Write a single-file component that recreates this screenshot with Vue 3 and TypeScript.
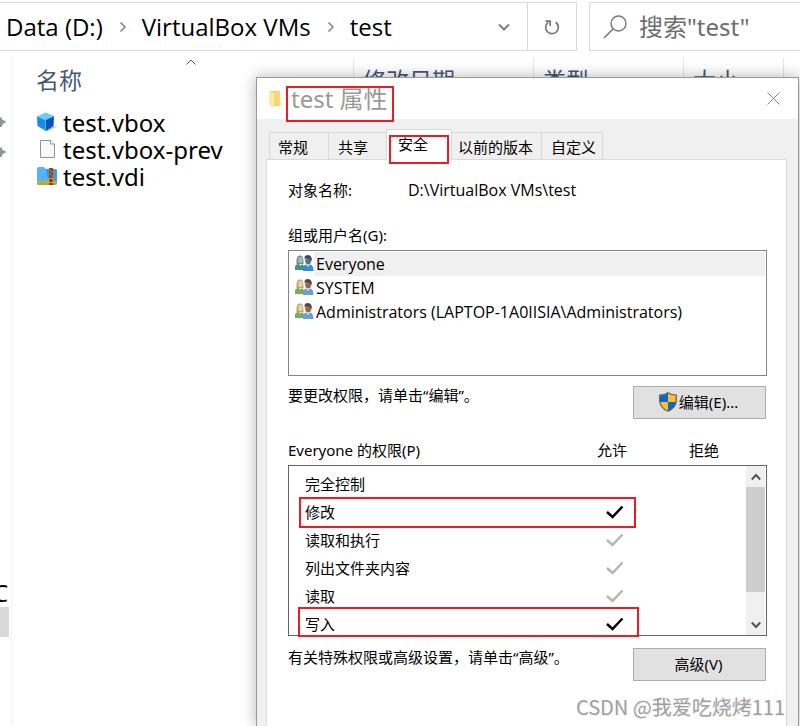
<script setup lang="ts">
import { ref } from 'vue'

interface FileEntry { name: string; kind: 'box' | 'page' | 'archive' }
interface Permission { label: string; state: '' | 'own' | 'inherited' }

const crumbs: string[] = ['Data (D:)', 'VirtualBox VMs', 'test']
const columns: string[] = ['名称', '修改日期', '类型', '大小']
const files: FileEntry[] = [
  { name: 'test.vbox', kind: 'box' },
  { name: 'test.vbox-prev', kind: 'page' },
  { name: 'test.vdi', kind: 'archive' },
]
const tabs: string[] = ['常规', '共享', '安全', '以前的版本', '自定义']
const activeTab = ref('安全')
const groups: string[] = ['Everyone', 'SYSTEM', 'Administrators (LAPTOP-1A0IISIA\\Administrators)']
const selectedGroup = ref('Everyone')
const permissions: Permission[] = [
  { label: '完全控制', state: '' },
  { label: '修改', state: 'own' },
  { label: '读取和执行', state: 'inherited' },
  { label: '列出文件夹内容', state: 'inherited' },
  { label: '读取', state: 'inherited' },
  { label: '写入', state: 'own' },
]
const query = ref('')
</script>

<template>
  <div class="desktop">
    <header class="toolbar">
      <nav class="path">
        <template v-for="(crumb, i) in crumbs" :key="crumb">
          <svg v-if="i > 0" class="crumb-sep" width="8" height="12" viewBox="0 0 8 12">
            <path d="M1.5 1.5 6 6 1.5 10.500" fill="none" stroke="#868686" stroke-width="1.6" />
          </svg>
          <a href="#" class="crumb">{{ crumb }}</a>
        </template>
        <button class="icon-btn history" aria-label="历史记录">
          <svg width="12" height="8" viewBox="0 0 12 8"><path d="M1 1.500 6 6.500 11 1.500" fill="none" stroke="#808080" stroke-width="2" /></svg>
        </button>
        <button class="icon-btn refresh" aria-label="刷新">
          <svg width="16" height="18" viewBox="0 0 16 18">
            <path d="M11.600 4.200A6.300 6.300 0 1 1 4.200 4.400" fill="none" stroke="#757575" stroke-width="1.700" />
            <path d="M1.500 3.200H6.200V8" fill="none" stroke="#757575" stroke-width="1.700" />
          </svg>
        </button>
      </nav>
      <label class="search">
        <svg width="24" height="24" viewBox="0 0 24 24">
          <circle cx="15.500" cy="8.500" r="7.500" fill="none" stroke="#787878" stroke-width="1.400" />
          <path d="M10 14 1 23" stroke="#787878" stroke-width="1.600" />
        </svg>
        <input v-model="query" type="search" placeholder="搜索&quot;test&quot;" aria-label="搜索" />
      </label>
    </header>

    <main class="explorer">
      <aside class="sidebar">
        <svg v-for="n in 2" :key="n" class="pin" width="6" height="14" viewBox="0 0 6 14">
          <path d="M0 2.500 1.500 2.500 2.500 5 5.500 6V8L3 8.500 1.500 12H0Z" fill="#8d959e" />
        </svg>
        <span class="drive">C</span>
        <span class="thumb-h"></span>
      </aside>
      <section class="listing">
        <svg class="sort" width="10" height="6" viewBox="0 0 10 6"><path d="M.5 5.500 5 1 9.500 5.500" fill="none" stroke="#555" /></svg>
        <div class="columns">
          <button v-for="column in columns" :key="column" class="column">{{ column }}</button>
        </div>
        <ul class="files">
          <li v-for="file in files" :key="file.name">
            <svg v-if="file.kind === 'box'" width="20" height="20" viewBox="0 0 20 20">
              <path d="M9 19 17 14 19 15 11 19Z" fill="#bbb" />
              <path d="M0 4.500 8.500 .5 17 4 8.500 8Z" fill="#71c8fa" />
              <path d="M0 4.500 8.500 8 9 19 .5 14Z" fill="#168ce8" />
              <path d="M8.500 8 17 4 16.500 14 9 19Z" fill="#0753bd" />
              <path d="M0 4.500 8.500 8 17 4M8.500 8V18" fill="none" stroke="#4fb8f7" stroke-width=".8" />
            </svg>
            <svg v-else-if="file.kind === 'page'" width="20" height="20" viewBox="0 0 20 20">
              <path d="M3.500 1.500H13.500L17.500 5V18.500H3.500Z" fill="#f7f8f9" stroke="#929292" />
              <path d="M13.500 1.500V5H17.500" fill="#fff" stroke="#929292" />
            </svg>
            <svg v-else width="20" height="20" viewBox="0 0 20 20">
              <path d="M0 3Q0 1 2 1H7L9 3H18Q20 3 20 5V18H0Z" fill="#55b5f2" />
              <path d="M9 3H18Q20 3 20 5V15H14Q9 14 9 3Z" fill="#3c9de5" />
              <path d="M0 15H20V17H0Z" fill="#f2992e" />
              <path d="M0 17H20V18Q20 19 18 19H2Q0 19 0 18Z" fill="#7dc62e" />
              <path d="M12 2H16V19H12Z" fill="#8e431c" />
              <path d="M12 4H14M14 6H16M12 8H14M14 10H16" stroke="#d08048" />
              <path d="M12 12.500H16V16.500H12Z" fill="#713514" stroke="#e89b42" />
            </svg>
            <a href="#">{{ file.name }}</a>
          </li>
        </ul>
      </section>
    </main>

    <section class="dialog" role="dialog" aria-labelledby="dialog-title">
      <header class="titlebar">
        <svg class="folder" width="13" height="18" viewBox="0 0 13 18">
          <path d="M1 1H10V16H1Z" fill="#f4c95f" />
          <path d="M0 1 5 2.500V17.500L0 15.500Z" fill="#ffe9a4" />
          <path d="M5 2.500 11 1V12L12 13V15.500H5Z" fill="#f8d775" />
        </svg>
        <h1 id="dialog-title">test 属性</h1>
        <button class="icon-btn close" aria-label="关闭">
          <svg width="13" height="13" viewBox="0 0 13 13"><path d="M.5.5 12.500 12.500M12.500.5.5 12.500" stroke="#858585" /></svg>
        </button>
        <span class="mark mark-title"></span>
      </header>

      <div class="tabs" role="tablist">
        <button
          v-for="tab in tabs" :key="tab" role="tab" class="tab"
          :class="{ active: tab === activeTab }" :aria-selected="tab === activeTab"
          @click="activeTab = tab"
        >{{ tab }}<span v-if="tab === '安全'" class="mark mark-tab"></span></button>
      </div>

      <div class="panel" role="tabpanel">
        <div class="object"><span>对象名称:</span><span class="latin">D:\VirtualBox VMs\test</span></div>

        <div id="groups-label" class="caption">组或用户名(G):</div>
        <ul class="groups" role="listbox" aria-labelledby="groups-label">
          <li
            v-for="group in groups" :key="group" role="option"
            :class="{ selected: group === selectedGroup }" :aria-selected="group === selectedGroup"
            @click="selectedGroup = group"
          >
            <svg width="19" height="16" viewBox="0 0 19 16">
              <path class="coat-a" d="M0 15V12Q0 9 4 9H7L10 12V15Z" />
              <path class="hair-a" d="M1.500 9Q1 0 5 0.500 9 0 8.500 9Z" />
              <ellipse class="face-a" cx="5.500" cy="5" rx="2.400" ry="3.300" />
              <path d="M4 9 5.500 11 7 9Z" fill="#e9eee7" />
              <path class="coat-b" d="M8 16V13Q8 10 12 9.500H15Q18.500 10 18.500 16Z" />
              <ellipse class="face-b" cx="13.200" cy="5.500" rx="3" ry="4" />
              <path class="hair-b" d="M9.500 4Q9 0 13 0 17 0 17 6L15.500 4.500Q14 2.500 11 3Z" />
              <path d="M11.500 9.500 13 12 15 9.500Z" fill="#e6ecf3" />
            </svg>
            <span class="group-name latin">{{ group }}</span>
          </li>
        </ul>

        <div class="action">
          <p>要更改权限，请单击“编辑”。</p>
          <button class="push">
            <svg width="18" height="20" viewBox="0 0 18 20">
              <path d="M9 .5Q12 3 17.300 3V9Q17 15.500 9 19.500 1 15.500.7 9V3Q6 3 9 .5Z" fill="#ffbd32" />
              <path d="M9 1V10H1V3.500Q6 3.500 9 1ZM9 10H17Q16 15.500 9 19Z" fill="#0869c7" />
              <path d="M9 .7Q12 3 17.300 3V9Q17 15.500 9 19.300 1 15.500.7 9V3Q6 3 9 .7Z" fill="none" stroke="#555c60" stroke-width="1.200" />
            </svg>编辑(E)...
          </button>
        </div>

        <div class="perm-head">
          <span>Everyone 的权限(P)</span><span>允许</span><span>拒绝</span>
        </div>
        <div class="perm-wrap">
          <div class="perm-box">
            <table class="perms">
              <tbody>
                <tr v-for="permission in permissions" :key="permission.label">
                  <th scope="row">{{ permission.label }}</th>
                  <td>
                    <svg v-if="permission.state" :class="permission.state" role="img" aria-label="允许" width="18" height="14" viewBox="0 0 18 14">
                      <path d="M1 7 6.500 12 16.500 1.500" fill="none" stroke="currentColor" stroke-width="2.500" />
                    </svg>
                  </td>
                  <td></td>
                </tr>
              </tbody>
            </table>
            <div class="scrollbar">
              <button class="icon-btn" aria-label="向上"><svg width="10" height="8" viewBox="0 0 10 8"><path d="M.8 6.500 5 2 9.200 6.500" fill="none" stroke="#555" stroke-width="2" /></svg></button>
              <div class="track"><div class="thumb"></div></div>
              <button class="icon-btn" aria-label="向下"><svg width="10" height="8" viewBox="0 0 10 8"><path d="M.8 1.500 5 6 9.200 1.500" fill="none" stroke="#555" stroke-width="2" /></svg></button>
            </div>
          </div>
          <span class="mark mark-modify"></span>
          <span class="mark mark-write"></span>
        </div>

        <div class="action advanced">
          <p>有关特殊权限或高级设置，请单击“高级”。</p>
          <button class="push">高级(V)</button>
        </div>
      </div>
    </section>

    <div class="watermark">CSDN @我爱吃烧烤111</div>
  </div>
</template>

<style>
body { margin: 0; background: #fff; }
</style>

<style scoped>
.desktop {
  position: relative;
  display: flex;
  flex-direction: column;
  min-height: 100vh;
  overflow: hidden;
  color: #000;
  font-family: "Noto Sans", "Noto Sans CJK SC", sans-serif;
  font-size: 15px;
  line-height: 20px;
}
* { box-sizing: border-box; }
button, input { font: inherit; color: inherit; margin: 0; padding: 0; border: 0; background: none; }
a { color: inherit; text-decoration: none; }
ul, p, h1 { margin: 0; padding: 0; list-style: none; font-weight: 400; }
svg { display: block; flex: none; }
.icon-btn { display: flex; align-items: center; justify-content: center; }
.latin { font-family: "Open Sans", "Noto Sans CJK SC", sans-serif; font-size: 16px; }

.toolbar { display: flex; gap: 12px; padding-top: 2px; }
.path {
  display: flex;
  flex: 1;
  align-items: center;
  height: 49px;
  padding-left: 6px;
  border: 1px solid #d9d9d9;
  border-left: 0;
  font-family: "Open Sans", "Noto Sans CJK SC", sans-serif;
  font-size: 24px;
  line-height: 32px;
}
.crumb-sep { margin: 0 15px 0 16px; }
.history { width: 46px; height: 100%; margin-left: auto; }
.refresh { width: 49px; height: 100%; border-left: 1px solid #d9d9d9; }
.search {
  display: flex;
  align-items: center;
  gap: 12px;
  width: 211px;
  height: 49px;
  padding-left: 13px;
  border: 1px solid #d9d9d9;
  border-right: 0;
  font-size: 24px;
}
.search input { flex: 1; min-width: 0; outline: 0; appearance: none; }
.search input::placeholder { color: #6d6d6d; opacity: 1; }

.explorer { display: flex; flex: 1; padding-top: 7px; }
.sidebar { display: flex; flex-direction: column; width: 12px; border-right: 1px solid #f0f0f0; overflow: hidden; padding-top: 57px; }
.pin { margin-bottom: 16px; }
.drive { margin-top: 404px; margin-left: -7px; font-size: 24px; line-height: 28px; width: 16px; overflow: hidden; }
.thumb-h { width: 9px; height: 30px; background: #d9d9d9; }
.listing { position: relative; flex: 1; min-width: 0; }
.sort { position: absolute; left: 174px; top: 1px; }
.columns { display: grid; grid-template-columns: 342px 180px 150px 100px; height: 43px; }
.column {
  padding-left: 9px;
  border-right: 1px solid #e5e5e5;
  color: #44597a;
  font-size: 23px;
  text-align: left;
}
.column:first-child { padding-left: 24px; }
.files { padding: 8px 0 0 25px; }
.files li { display: flex; align-items: center; gap: 6px; height: 27px; font-size: 24px; line-height: 27px; }
.files svg { margin-bottom: 2px; }

.dialog {
  position: absolute;
  left: 256px;
  right: 1px;
  top: 77px;
  bottom: 0;
  border: 1px solid #999;
  border-bottom: 0;
  background: #f0f0f0;
  box-shadow: 0 0 14px rgba(0, 0, 0, .3);
}
.titlebar { position: relative; display: flex; align-items: center; gap: 9px; height: 41px; padding: 0 18px 0 12px; background: #fff; }
.titlebar h1 { color: #999; font-size: 24px; line-height: 30px; }
.close { width: 13px; height: 30px; margin-left: auto; }
.mark { position: absolute; border: 2px solid #ed1c24; pointer-events: none; }
.mark-title { left: 29px; top: 8px; width: 108px; height: 36px; }
.mark-tab { left: 2px; top: 5px; width: 60px; height: 29px; }

.tabs { display: flex; align-items: flex-end; height: 40px; padding-left: 12px; }
.tab { height: 27px; padding: 2px 8px 0 6px; border: 1px solid #d9d9d9; border-width: 1px 1px 0 0; white-space: nowrap; }
.tab:first-child { border-left-width: 1px; padding: 2px 20px 0 8px; }
.tab:nth-child(2) { padding: 2px 18px 0 9px; }
.tab:last-child { padding: 2px 6px 0 9px; }
.tab.active { position: relative; z-index: 1; height: 31px; margin: 0 0 -1px -1px; padding: 0 23px 2px 11px; border-left-width: 1px; background: #fff; }

.panel { height: calc(100% - 81px); margin: 0 11px 0 9px; padding: 20px 19px 0 21px; border: 1px solid #d9d9d9; border-bottom: 0; background: #fff; }
.object { display: flex; }
.object span:first-child { width: 120px; }
.caption { margin: 25px 0 5px; }
.groups { height: 126px; padding: 1px; border: 1px solid #7f858d; }
.groups li { display: flex; align-items: center; height: 24px; padding-left: 5px; }
.groups li svg { margin-bottom: 2px; }
.group-name { flex: 1; padding-left: 2px; line-height: 24px; white-space: nowrap; }
.selected .group-name { background: #f0f0f0; }
.coat-a { fill: #79a861; } .hair-a { fill: #b9a360; } .face-a { fill: #ead0a8; }
.coat-b { fill: #6b9ed2; } .hair-b { fill: #4c4741; } .face-b { fill: #9a6747; }
.selected .coat-a { fill: #459678; } .selected .hair-a { fill: #688a8b; } .selected .face-a { fill: #a4bcc0; }
.selected .coat-b { fill: #3989d3; } .selected .hair-b { fill: #344e63; } .selected .face-b { fill: #59738a; }

.action { display: flex; justify-content: space-between; align-items: flex-start; margin-top: 9px; padding-right: 1px; }
.push { display: flex; align-items: center; justify-content: center; gap: 2px; width: 133px; height: 33px; margin-top: 1px; padding: 0 2px 2px 0; border: 1px solid #adadad; background: #e1e1e1; }
.perm-head { display: grid; grid-template-columns: 1fr 92px 78px; padding-top: 21px; margin-bottom: 5px; }
.perm-wrap { position: relative; }
.perm-box { display: flex; height: 171px; padding-right: 1px; border: 1px solid #646464; overflow: hidden; }
.perms { flex: 1; margin-top: 4px; border-collapse: collapse; table-layout: fixed; align-self: flex-start; }
.perms tr { height: 28px; }
.perms th { padding: 0 0 0 16px; font-weight: 400; text-align: left; }
.perms td { width: 70px; padding: 0; }
.own { color: #000; }
.inherited { color: #b5b5b5; }
.perms td:nth-child(2) { width: 140px; }
.perms td:last-child { width: 0; }
.scrollbar { display: flex; flex-direction: column; width: 19px; background: #f0f0f0; }
.scrollbar .icon-btn { height: 21px; }
.track { flex: 1; }
.thumb { height: 105px; background: #cdcdcd; }
.mark-modify { left: 11px; top: 32px; right: 131px; height: 31px; }
.mark-write { left: 10px; top: 142px; right: 128px; height: 30px; }
.advanced { margin-top: 11px; }

.watermark {
  position: absolute;
  right: 15px;
  bottom: 4px;
  color: #a0a0a0;
  font-family: "Noto Sans CJK SC", sans-serif;
  font-size: 20px;
  line-height: 30px;
  text-shadow: 1px 1px 0 #eee;
}
</style>
